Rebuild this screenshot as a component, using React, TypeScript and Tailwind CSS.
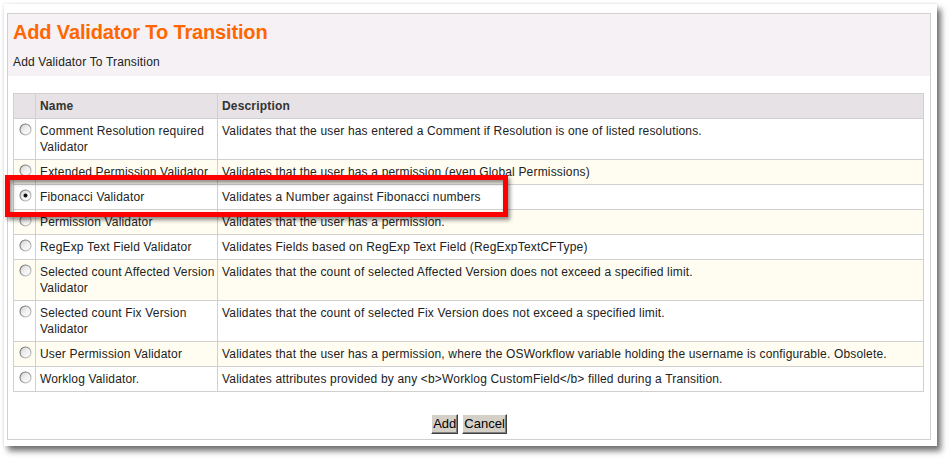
import React from "react";

type Row = { name: string; desc: string; tall?: boolean; checked?: boolean };

const rows: Row[] = [
  { name: "Comment Resolution required Validator", desc: "Validates that the user has entered a Comment if Resolution is one of listed resolutions.", tall: true },
  { name: "Extended Permission Validator", desc: "Validates that the user has a permission (even Global Permissions)" },
  { name: "Fibonacci Validator", desc: "Validates a Number against Fibonacci numbers", checked: true },
  { name: "Permission Validator", desc: "Validates that the user has a permission." },
  { name: "RegExp Text Field Validator", desc: "Validates Fields based on RegExp Text Field (RegExpTextCFType)" },
  { name: "Selected count Affected Version Validator", desc: "Validates that the count of selected Affected Version does not exceed a specified limit.", tall: true },
  { name: "Selected count Fix Version Validator", desc: "Validates that the count of selected Fix Version does not exceed a specified limit.", tall: true },
  { name: "User Permission Validator", desc: "Validates that the user has a permission, where the OSWorkflow variable holding the username is configurable. Obsolete." },
  { name: "Worklog Validator.", desc: "Validates attributes provided by any <b>Worklog CustomField</b> filled during a Transition." },
];

function Radio({ checked }: { checked?: boolean }) {
  return (
    <svg width="13" height="13" viewBox="0 0 13 13" className="block">
      <defs>
        <linearGradient id="rg" x1="0" y1="0" x2="1" y2="1">
          <stop offset="0" stopColor="#cfcfcf" />
          <stop offset="0.5" stopColor="#f0f0f0" />
          <stop offset="1" stopColor="#ffffff" />
        </linearGradient>
        <linearGradient id="rs" x1="0" y1="0" x2="1" y2="1">
          <stop offset="0" stopColor="#5e5e5e" />
          <stop offset="1" stopColor="#d0d0d0" />
        </linearGradient>
      </defs>
      <circle cx="6.5" cy="6.5" r="5.5" fill="url(#rg)" stroke="url(#rs)" strokeWidth="1.1" />
      {checked && <circle cx="6.5" cy="6.5" r="2" fill="#111" />}
    </svg>
  );
}

export default function App() {
  return (
    <div
      className="relative w-[949px] h-[459px] bg-white pt-[4px] pl-[4px]"
      style={{ fontFamily: '"Liberation Sans", Arial, sans-serif' }}
    >
      <div className="w-[933px] h-[442px] bg-white pt-[9px] pl-[3px] pr-[6px] pb-[6px] shadow-[0_0_3px_rgba(0,0,0,0.12),4px_5px_6px_rgba(0,0,0,0.55)]">
        <div className="w-[924px] h-[427px] border border-[#d0d0d0] flex flex-col">
          <div className="h-[62px] bg-[#f5f1f5] px-[5px] pt-[6px]">
            <div className="text-[20px] leading-[24px] font-bold text-[#ff6600] tracking-[-0.15px]">Add Validator To Transition</div>
            <div className="mt-[10px] text-[12px] leading-[16px] text-[#222] tracking-[0.17px]">Add Validator To Transition</div>
          </div>

          <div className="ml-[5px] mt-[17px] w-[911px] border border-[#d0d0d0] text-[12px] leading-[16px] text-[#222] tracking-[0.17px]">
            <div className="grid grid-cols-[21px_182px_706px] bg-[#e6e2e6] font-bold text-[#333]">
              <div className="h-[24px]" />
              <div className="border-l border-[#d0d0d0] px-[4px] py-[4px]">Name</div>
              <div className="border-l border-[#d0d0d0] px-[4px] py-[4px]">Description</div>
            </div>
            {rows.map((r, i) => (
              <div
                key={i}
                className={
                  "grid grid-cols-[21px_182px_706px] border-t border-[#d0d0d0] " +
                  (i % 2 === 1 ? "bg-[#fffdf2]" : "bg-white")
                }
              >
                <div className="pl-[5px] pt-[4px]">
                  <Radio checked={r.checked} />
                </div>
                <div className={"border-l border-[#d0d0d0] pl-[4px] pr-[1px] py-[4px] " + (r.tall ? "h-[40px]" : "h-[24px]")}>
                  {r.name}
                </div>
                <div className="border-l border-[#d0d0d0] px-[4px] py-[4px]">{r.desc}</div>
              </div>
            ))}
          </div>

          <div className="mt-[22px] flex justify-center gap-[4px]">
            <button className="h-[20px] px-[1px] text-[13px] leading-[16px] text-black bg-[#d4d0c8] border border-t-white border-l-white border-r-[#404040] border-b-[#404040] shadow-[inset_-1px_-1px_0_#808080]">
              Add
            </button>
            <button className="h-[20px] px-[1px] text-[13px] leading-[16px] text-black bg-[#d4d0c8] border border-t-white border-l-white border-r-[#404040] border-b-[#404040] shadow-[inset_-1px_-1px_0_#808080]">
              Cancel
            </button>
          </div>
        </div>
      </div>

      <div className="absolute left-[5px] top-[175px] w-[503px] h-[42px] border-[5px] border-[#ff0000] shadow-[2px_3px_4px_rgba(0,0,0,0.45),inset_2px_3px_4px_rgba(0,0,0,0.45)]" />
    </div>
  );
}
